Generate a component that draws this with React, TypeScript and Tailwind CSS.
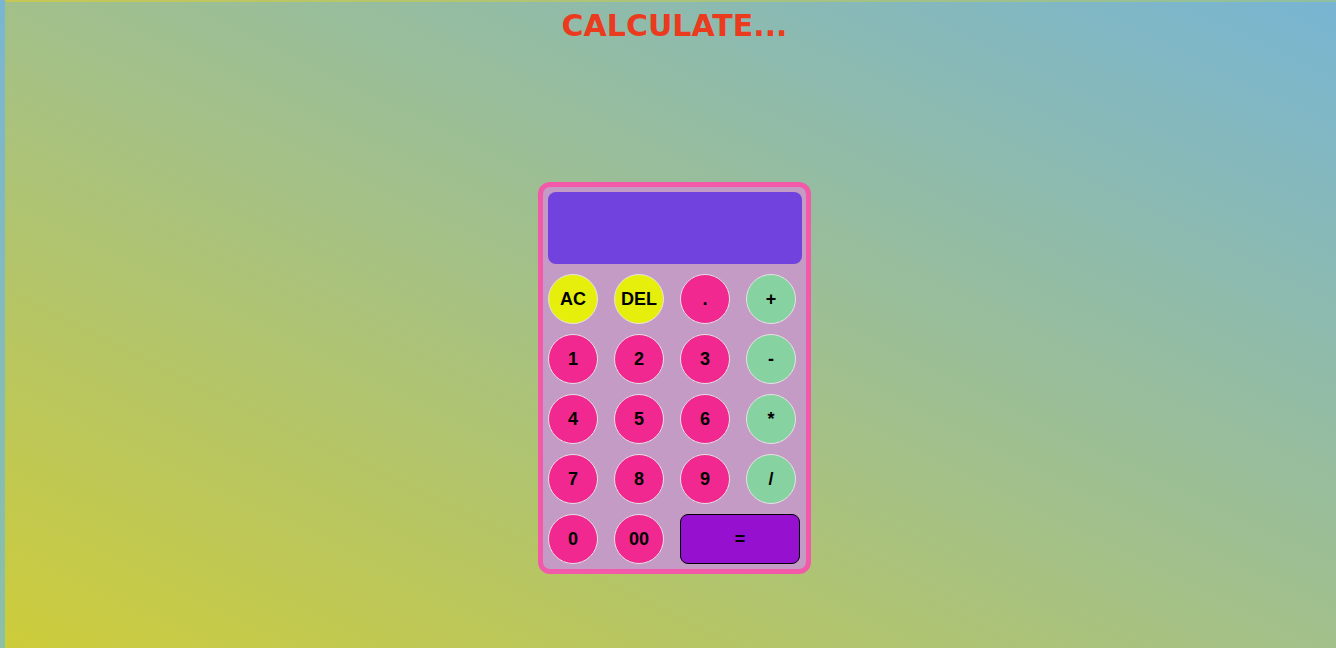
const keys: { label: string; kind: 'clear' | 'num' | 'op' | 'eq' }[] = [
  { label: 'AC', kind: 'clear' },
  { label: 'DEL', kind: 'clear' },
  { label: '.', kind: 'num' },
  { label: '+', kind: 'op' },
  { label: '1', kind: 'num' },
  { label: '2', kind: 'num' },
  { label: '3', kind: 'num' },
  { label: '-', kind: 'op' },
  { label: '4', kind: 'num' },
  { label: '5', kind: 'num' },
  { label: '6', kind: 'num' },
  { label: '*', kind: 'op' },
  { label: '7', kind: 'num' },
  { label: '8', kind: 'num' },
  { label: '9', kind: 'num' },
  { label: '/', kind: 'op' },
  { label: '0', kind: 'num' },
  { label: '00', kind: 'num' },
  { label: '=', kind: 'eq' },
];

const circle = 'w-[50px] h-[50px] rounded-full border border-[#e6e2e6] flex items-center justify-center';

export default function App() {
  return (
    <div className="min-h-screen w-full bg-[linear-gradient(to_bottom,#7ab6d2,#8cc0a6)] pl-[5px] font-['Liberation_Sans',Arial,sans-serif]">
      <div className="min-h-screen bg-[linear-gradient(to_right,#c6c854,#8fbfa2)] pt-[2px]">
        <div className="h-[646px] bg-[linear-gradient(to_top_right,#cdcc3a,#a2c08a_50%,#78b5d3)] pl-[8px] flex flex-col items-center">
          {/* Title */}
          <h1 className="mt-[6px] h-[35px] text-[30px] leading-[36px] font-bold text-[#ea3b1e] font-['DejaVu_Sans',Verdana,sans-serif]">
            CALCULATE...
          </h1>

          {/* Calculator */}
          <div className="mt-[139px] w-[273px] border-[5px] border-[#f25aa9] rounded-[12px] bg-[#c39bc4] pl-[5px] pr-[4px] pt-[5px] pb-[5px]">
            <div className="h-[72px] w-[254px] rounded-[8px] bg-[#7142de]" />
            <div className="mt-[10px] grid grid-cols-[50px_50px_50px_50px] gap-x-[16px] gap-y-[10px]">
              {keys.map((k) => {
                if (k.kind === 'eq') {
                  return (
                    <button
                      key={k.label}
                      className="col-span-2 w-[120px] h-[50px] rounded-[8px] border border-black bg-[#9610d0] flex items-center justify-center text-[18px] font-bold text-black"
                    >
                      {k.label}
                    </button>
                  );
                }
                const bg =
                  k.kind === 'clear' ? 'bg-[#e6ef0b]' : k.kind === 'op' ? 'bg-[#86d2a0]' : 'bg-[#f0288f]';
                return (
                  <button key={k.label} className={`${circle} ${bg} text-[18px] font-bold text-black`}>
                    {k.label}
                  </button>
                );
              })}
            </div>
          </div>
        </div>
      </div>
    </div>
  );
}
